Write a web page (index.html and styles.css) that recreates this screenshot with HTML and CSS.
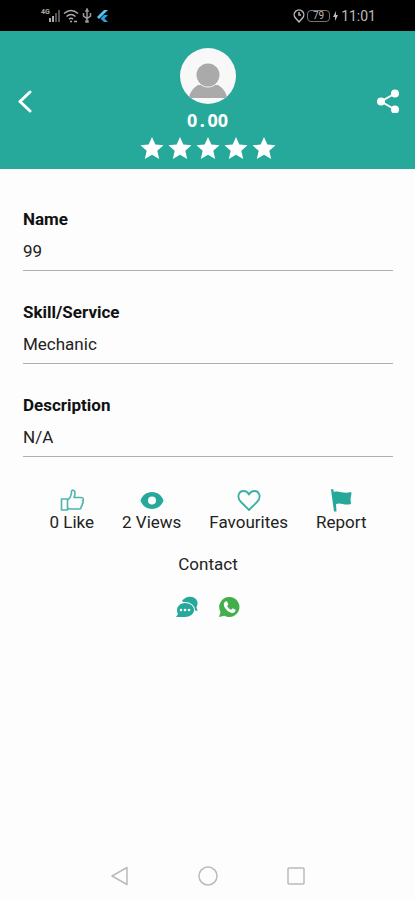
FILE: index.html
```html
<!DOCTYPE html>
<html lang="en">
<head>
<meta charset="utf-8">
<meta name="viewport" content="width=device-width, initial-scale=1">
<title>Profile</title>
<link rel="stylesheet" href="styles.css">
</head>
<body>
<div class="status">
  <div class="status-group">
    <svg width="20" height="16" viewBox="0 0 20 16"><text class="net" x="0" y="6">4G</text><path fill="#aaa" d="M8 10h2v4H8zM11 8h2v6h-2z"/><path fill="#555" d="M14 5h2v9h-2zM17 2h2v12h-2z"/></svg>
    <svg width="16" height="16" viewBox="0 0 16 16" fill="none" stroke="#aaa" stroke-width="1.6"><path d="M1 5.5q7-6 14 0M3.500 8.500q4.500-4 9 0M6 11q2-1.500 4 0"/><path d="M7 13.500h2M11 13.500h3"/></svg>
    <svg width="12" height="16" viewBox="0 0 12 16" fill="none" stroke="#999" stroke-width="1.500"><path d="M6 2v12M2.500 5v3L6 10.500 9.500 8V5"/><path fill="#999" d="M5 3l1-2 1 2zM5 13h2v1H5z"/></svg>
    <svg width="14" height="16" viewBox="0 0 14 16"><path fill="#54c5f8" d="M9 2h4L4 11 2 9z"/><path fill="#2f9ee0" d="M9 7h4l-3.500 3.500L13 14H9l-3.500-3.500z"/></svg>
  </div>
  <div class="status-group">
    <svg width="12" height="16" viewBox="0 0 12 16" fill="none" stroke="#bbb" stroke-width="1.400"><path d="M6 14L2.500 10A4.800 4.800 0 1 1 9.500 10z"/><path d="M6 4v3h2"/></svg>
    <span class="battery">79</span>
    <svg width="7" height="12" viewBox="0 0 7 12"><path fill="#bbb" d="M4 1L1 7h2v4l3-6H4z"/></svg>
    <span class="clock">11:01</span>
  </div>
</div>

<header class="header">
  <button class="icon-button" aria-label="Back"><svg width="24" height="24" viewBox="0 0 24 24" fill="none" stroke="#fff" stroke-width="3" stroke-linecap="round" stroke-linejoin="round"><path d="M15 3L5 12.500 15 22"/></svg></button>
  <div class="profile">
    <svg class="avatar" width="56" height="56" viewBox="0 0 56 56"><circle cx="28" cy="28" r="28" fill="#f8f8f8"/><path fill="#aaa" d="M9 50c1-6 4-10 9-13h20c5 3 8 7 9 13z"/><circle cx="28" cy="27" r="11.500" fill="#aaa" stroke="#f8f8f8" stroke-width="2" paint-order="stroke"/></svg>
    <div class="score">0<span class="point">.</span>00</div>
    <div class="stars" role="img" aria-label="Rating">
      <svg viewBox="0 0 24 24"><path d="M12 1l3.300 7.500 8.200.800-6.200 5.500 1.900 8.200L12 18.700 4.800 23l1.900-8.200L.5 9.300l8.200-.8z"/></svg>
      <svg viewBox="0 0 24 24"><path d="M12 1l3.300 7.500 8.200.800-6.200 5.500 1.900 8.200L12 18.700 4.800 23l1.900-8.200L.5 9.300l8.200-.8z"/></svg>
      <svg viewBox="0 0 24 24"><path d="M12 1l3.300 7.500 8.200.800-6.200 5.500 1.900 8.200L12 18.700 4.800 23l1.900-8.200L.5 9.300l8.200-.8z"/></svg>
      <svg viewBox="0 0 24 24"><path d="M12 1l3.300 7.500 8.200.800-6.200 5.500 1.900 8.200L12 18.700 4.800 23l1.900-8.200L.5 9.300l8.200-.8z"/></svg>
      <svg viewBox="0 0 24 24"><path d="M12 1l3.300 7.500 8.200.800-6.200 5.500 1.900 8.200L12 18.700 4.800 23l1.900-8.200L.5 9.300l8.200-.8z"/></svg>
    </div>
  </div>
  <button class="icon-button" aria-label="Share"><svg width="24" height="24" viewBox="0 0 24 24" fill="#fff" stroke="#fff" stroke-width="2"><path fill="none" d="M19 4.500L5 12.500l14 8"/><circle cx="19" cy="4.500" r="3"/><circle cx="5" cy="12.500" r="3"/><circle cx="19" cy="20.500" r="3"/></svg></button>
</header>

<main class="content">
  <dl class="fields">
    <div class="field"><dt>Name</dt><dd>99</dd></div>
    <div class="field"><dt>Skill/Service</dt><dd>Mechanic</dd></div>
    <div class="field"><dt>Description</dt><dd>N/A</dd></div>
  </dl>

  <div class="actions">
    <button class="action"><svg width="24" height="24" viewBox="0 0 24 24" fill="none" stroke="#4db6a8" stroke-width="1.600" stroke-linejoin="round"><path d="M1.500 11h6v11h-6zM7.500 12c3-2 4-4.500 4-8.500 0-2 3.500-2 3.500 1.500 0 2-.5 3-1 4.500h7c3 0 2.700 3 1.500 3.500 1 1 .8 2.500-.5 3 .6 1.300 0 2.300-1 2.700.3 1.500-.5 2.300-2 2.300h-8q-2 0-3.500-1"/></svg><span>0 Like</span></button>
    <button class="action"><svg width="24" height="24" viewBox="0 0 24 24" fill="#26a99a" fill-rule="evenodd"><path d="M12 4C6 4 2 8 .5 12.500 2 17 6 21 12 21s10-4 11.500-8.500C22 8 18 4 12 4zm0 4.500a4 4 0 1 1 0 8 4 4 0 0 1 0-8z"/></svg><span>2 Views</span></button>
    <button class="action"><svg width="24" height="24" viewBox="0 0 24 24" fill="none" stroke="#3bb0a2" stroke-width="1.800" stroke-linejoin="round"><path d="M12 22L4 14C-1 9 2 3 6.500 3 9 3 11 4.500 12 6.500 13 4.500 15 3 17.500 3 22 3 25 9 20 14z"/></svg><span>Favourites</span></button>
    <button class="action"><svg width="24" height="24" viewBox="0 0 24 24" fill="#26a99a"><path d="M2 1.500q1.500-1 2.500.5l.3 2c6-2 9 2.500 17.200 0l.5 1.500-1 5.500.5 5c-7 2-10-2-15 0l.5 7.500H5z"/></svg><span>Report</span></button>
  </div>

  <h2 class="contact-title">Contact</h2>
  <div class="contact-links">
    <a href="#chat" aria-label="Chat"><svg width="22" height="22" viewBox="0 0 22 22"><path fill="#26a99a" d="M6 5C8 2 12 0 16 1c5 1 7 6 4.500 10l1 4-4-1L6 5z"/><path fill="#26a99a" stroke="#fdfdfd" stroke-width="2" paint-order="stroke" d="M9 7c5 0 9 3 9 7s-4 7-9 7H0l2-3c-3-5 1-11 7-11z"/><g fill="#fff"><circle cx="5" cy="14" r="1.300"/><circle cx="9" cy="14" r="1.300"/><circle cx="13" cy="14" r="1.300"/></g></svg></a>
    <a href="#whatsapp" aria-label="WhatsApp"><svg width="22" height="22" viewBox="0 0 22 22"><path fill="#43af4b" d="M11.500 1a10 10 0 1 1-5 18.700L1 21l1.600-5A10 10 0 0 1 11.500 1z"/><path fill="#fff" d="M7.500 5.500l1.500-.2 1.300 3.200-1.200 1.500c1 2 2.200 3 4 3.800l1.400-1.600 3.100 1.500c.2 2-1.500 3.300-3.300 3.300C10.500 16.500 6 12.500 5.800 8.500c0-1.300.6-2.300 1.700-3z"/></svg></a>
  </div>
</main>

<nav class="nav">
  <button aria-label="Back"><svg width="20" height="20" viewBox="0 0 20 20"><path d="M17 1.500v17L2 10z"/></svg></button>
  <button aria-label="Home"><svg width="20" height="20" viewBox="0 0 20 20"><circle cx="10" cy="10" r="9"/></svg></button>
  <button aria-label="Recent"><svg width="20" height="20" viewBox="0 0 20 20"><rect x="2" y="2" width="16" height="16" rx="1"/></svg></button>
</nav>
</body>
</html>
```
FILE: styles.css
```css
* { box-sizing: border-box; }

body {
  margin: 0;
  min-height: 100vh;
  display: flex;
  flex-direction: column;
  background: #fdfdfd;
  color: #222;
  font-family: Roboto, sans-serif;
  font-size: 17px;
  line-height: 20px;
}

button {
  padding: 0;
  border: 0;
  background: none;
  color: inherit;
  font: inherit;
  cursor: pointer;
}

svg { display: block; }

.status {
  display: flex;
  justify-content: space-between;
  align-items: center;
  height: 31px;
  padding: 0 39px 0 41px;
  background: #000;
  color: #bbb;
}

.status-group {
  display: flex;
  align-items: center;
  gap: 2px;
}

.net {
  fill: #aaa;
  font-size: 7px;
  font-weight: 700;
}

.battery {
  padding: 0 5px;
  border: 1px solid #777;
  border-radius: 4px;
  font-size: 10px;
  line-height: 10px;
}

.clock { font-size: 14px; }

.header {
  display: flex;
  justify-content: space-between;
  align-items: center;
  padding: 17px 15px 9px;
  background: #26a99a;
}

.icon-button { padding-bottom: 6px; }

.profile {
  display: flex;
  flex-direction: column;
  align-items: center;
}

.score {
  margin: 4px 0;
  color: #fff;
  font-family: "Noto Sans", sans-serif;
  font-size: 18px;
  font-weight: 700;
  line-height: 24px;
}

.point {
  display: inline-block;
  width: 1ch;
  text-align: center;
}

.stars {
  display: flex;
  gap: 4px;
}

.stars svg {
  width: 24px;
  height: 24px;
  fill: #fff;
}

.content {
  flex: 1;
  padding: 40px 22px 0 23px;
}

.fields { margin: 0; }

.field {
  margin-bottom: 31px;
  padding-bottom: 9px;
  border-bottom: 1px solid #b0b0b0;
}

dt {
  margin-bottom: 12px;
  color: #111;
  font-weight: 700;
}

dd { margin: 0; }

.actions {
  display: flex;
  justify-content: center;
  gap: 28px;
}

.action {
  display: flex;
  flex-direction: column;
  align-items: center;
}

.contact-title {
  margin: 22px 0;
  font-size: 17px;
  font-weight: 400;
  text-align: center;
}

.contact-links {
  display: flex;
  justify-content: center;
  gap: 20px;
}

.nav {
  display: flex;
  justify-content: center;
  gap: 68px;
  padding: 14px 0;
}

.nav svg {
  fill: none;
  stroke: #bbb;
  stroke-width: 1.5;
  stroke-linejoin: round;
}
```
